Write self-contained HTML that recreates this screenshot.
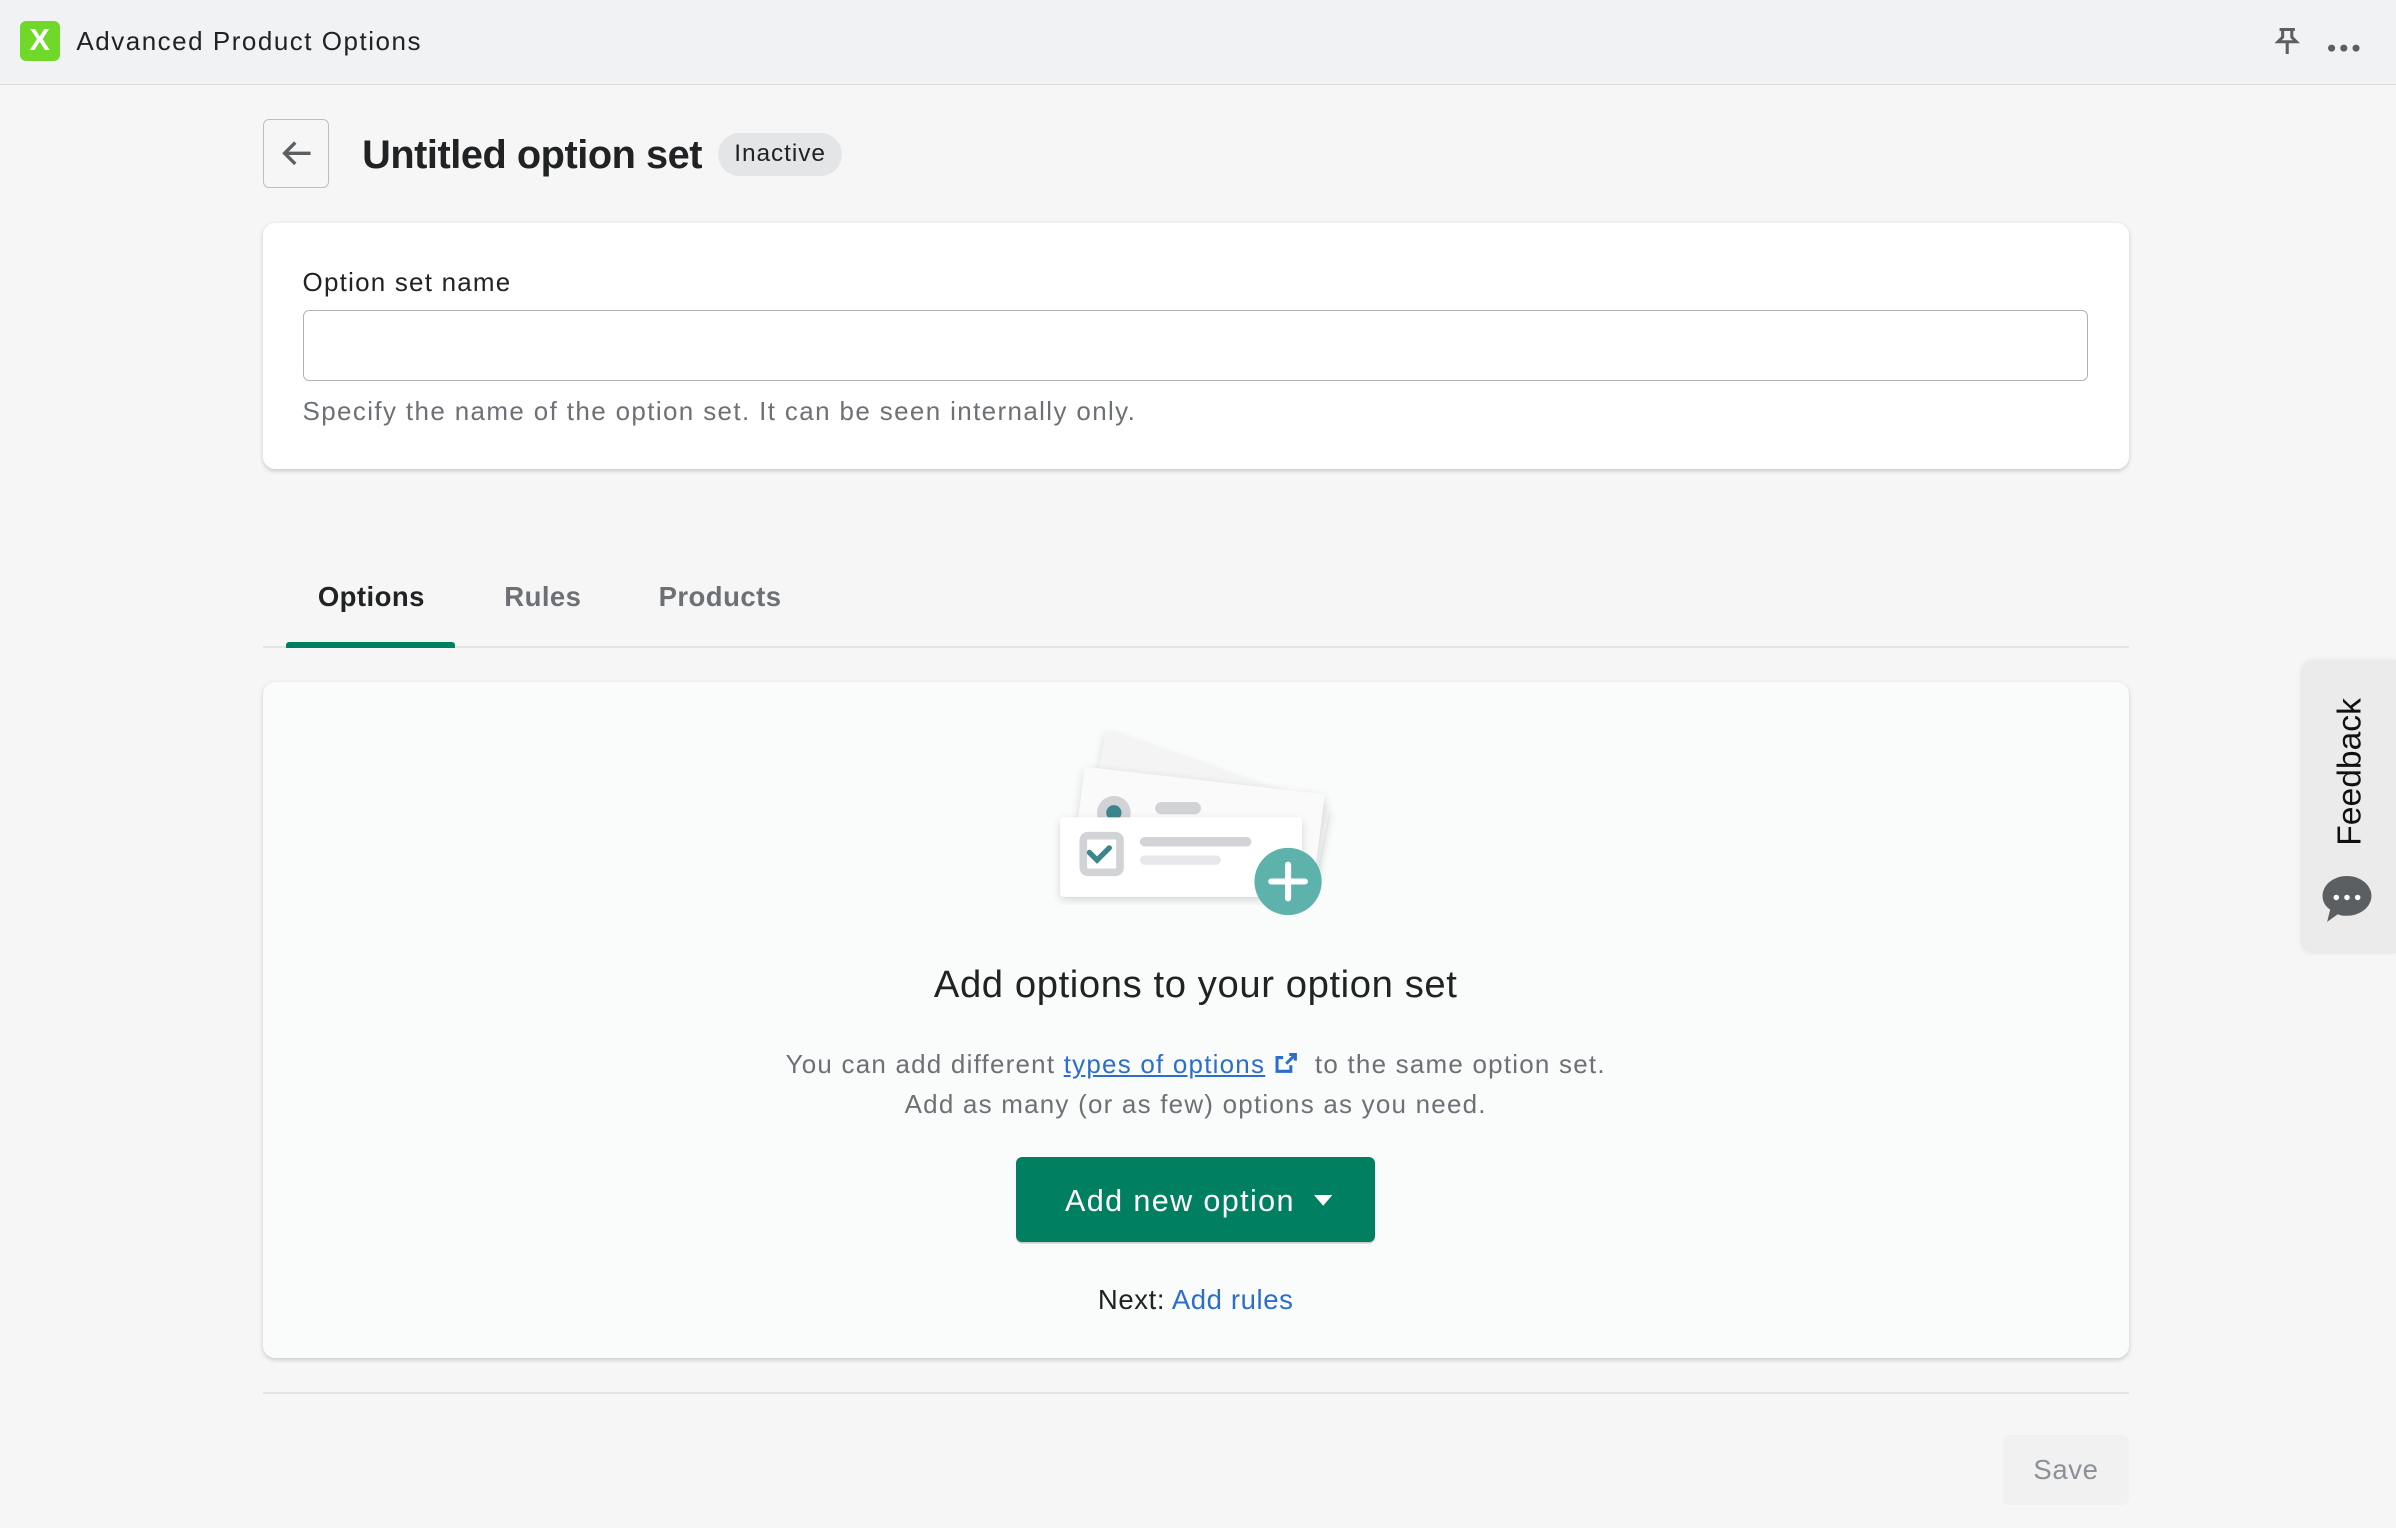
<!DOCTYPE html>
<html><head><meta charset="utf-8"><style>
html,body{margin:0;padding:0;width:2396px;height:1528px;overflow:hidden;background:#f6f6f7}
#w{zoom:1.52806;width:1568px;height:1000px;position:relative;font-family:"Liberation Sans",sans-serif;color:#202223}
.a{position:absolute}
</style></head><body><div id="w">
<div class="a" style="left:0;top:0;width:1568px;height:55px;background:#f1f2f4;border-bottom:1px solid #dcdde0"></div>
<div class="a" style="left:13px;top:14px;width:26px;height:26px;background:#6fd829;border-radius:4px;color:#fff;font-weight:bold;font-size:20px;text-align:center;line-height:26px">X</div>
<div class="a" style="left:50px;top:17px;font-size:17px;letter-spacing:1px">Advanced Product Options</div>
<svg class="a" style="left:1489px;top:18px" width="16" height="18" viewBox="0 0 16 18"><path d="M3 1h10M5 1v5L2 9h12l-3-3V1M8 9v8" stroke="#5c5f62" stroke-width="2" fill="none"/></svg>
<div class="a" style="left:1523px;top:22px;width:22px;height:8px"><svg width="22" height="8"><circle cx="3" cy="4" r="2.3" fill="#5c5f62"/><circle cx="11" cy="4" r="2.3" fill="#5c5f62"/><circle cx="19" cy="4" r="2.3" fill="#5c5f62"/></svg></div>

<div class="a" style="left:172px;top:78px;width:42px;height:44px;border:1px solid #babfc3;border-radius:4px;background:#f6f6f7"></div>
<svg class="a" style="left:183px;top:90px" width="22" height="20" viewBox="0 0 22 20"><path d="M20 10H3M10 3L3 10l7 7" stroke="#5c5f62" stroke-width="2.2" fill="none"/></svg>
<div class="a" style="left:237px;top:87px;font-size:26px;font-weight:600;letter-spacing:-.3px">Untitled option set</div>
<div class="a" style="left:470px;top:87px;width:81px;height:28px;background:#e4e5e7;border-radius:14px;font-size:16px;line-height:28px;text-align:center;letter-spacing:.6px">Inactive</div>

<div class="a" style="left:172px;top:146px;width:1221px;height:161px;background:#fff;border-radius:8px;box-shadow:0 1px 3px rgba(0,0,0,.18)"></div>
<div class="a" style="left:198px;top:175px;font-size:17px;letter-spacing:.8px">Option set name</div>
<div class="a" style="left:198px;top:203px;width:1167px;height:45px;border:1px solid #aeb4b9;border-radius:4px;background:#fff"></div>
<div class="a" style="left:198px;top:259px;font-size:17px;color:#6d7175;letter-spacing:.9px">Specify the name of the option set. It can be seen internally only.</div>

<div class="a" style="left:208px;top:380px;font-size:18px;font-weight:600;letter-spacing:.3px">Options</div>
<div class="a" style="left:330px;top:380px;font-size:18px;color:#6d7175;font-weight:600;letter-spacing:.3px">Rules</div>
<div class="a" style="left:431px;top:380px;font-size:18px;color:#6d7175;font-weight:600;letter-spacing:.3px">Products</div>
<div class="a" style="left:172px;top:423px;width:1221px;height:1px;background:#e1e3e5"></div>
<div class="a" style="left:187px;top:420px;width:111px;height:4px;background:#008060;border-radius:2px 2px 0 0"></div>

<div class="a" style="left:172px;top:446px;width:1221px;height:443px;background:#fafbfb;border-radius:8px;box-shadow:0 1px 3px rgba(0,0,0,.18)"></div>
<svg class="a" style="left:680px;top:470px" width="200" height="135" viewBox="0 0 200 135">
<defs><filter id="s"><feDropShadow dx="0" dy="2" stdDeviation="3" flood-opacity=".15"/></filter></defs>
<path d="M44 8L190 60 180 110 34 60Z" fill="#f4f4f5" filter="url(#s)"/>
<path d="M30 32L187 50 180 105 22 95Z" fill="#fafafa" filter="url(#s)"/>
<circle cx="49" cy="62" r="11" fill="#d2d3d7"/><circle cx="49" cy="62" r="5" fill="#3c858c"/>
<rect x="76" y="55" width="30" height="8" rx="4" fill="#d2d3d7"/>
<rect x="14" y="65" width="158" height="52" rx="2" fill="#fff" filter="url(#s)"/>
<rect x="29" y="77" width="24" height="24" rx="3" fill="none" stroke="#d2d3d7" stroke-width="5"/>
<path d="M33 88l5 5 8-8" stroke="#3c858c" stroke-width="3.5" fill="none" stroke-linecap="round"/>
<rect x="66" y="78" width="73" height="6" rx="3" fill="#d2d3d7"/>
<rect x="66" y="90" width="53" height="6" rx="3" fill="#e6e7ea"/>
<circle cx="163" cy="107" r="22" fill="#5db3ab"/>
<path d="M152 107h22M163 96v22" stroke="#fff" stroke-width="4" stroke-linecap="round"/>
</svg>
<div class="a" style="left:172px;top:630px;width:1221px;text-align:center;font-size:25px;letter-spacing:.4px">Add options to your option set</div>
<div class="a" style="left:172px;top:684px;width:1221px;text-align:center;font-size:17px;color:#6d7175;line-height:26px;letter-spacing:.8px">You can add different <span style="color:#2c6ecb;text-decoration:underline">types of options</span> <svg width="16" height="14" viewBox="0 0 16 14" style="vertical-align:-1px"><path d="M6 3H2v9h9V8M8 7l6-6M10 1h4v4" stroke="#2c6ecb" stroke-width="2" fill="none"/></svg> &nbsp;to the same option set.<br>Add as many (or as few) options as you need.</div>
<div class="a" style="left:665px;top:757px;width:235px;height:56px;background:#008060;border-radius:4px;box-shadow:0 1px 0 rgba(0,0,0,.2);color:#fff;font-size:20px;line-height:58px"><span style="position:absolute;left:32px;letter-spacing:.9px">Add new option</span><svg style="position:absolute;left:195px;top:25px" width="12" height="7"><path d="M0 0h12L6 7z" fill="#fff"/></svg></div>
<div class="a" style="left:172px;top:840px;width:1221px;text-align:center;font-size:18px;letter-spacing:.4px">Next: <span style="color:#2c6ecb">Add rules</span></div>

<div class="a" style="left:172px;top:911px;width:1221px;height:1px;background:#e1e3e5"></div>
<div class="a" style="left:1311px;top:939px;width:82px;height:46px;background:#f1f1f1;border-radius:4px;color:#8c9196;font-size:18px;line-height:46px;text-align:center;letter-spacing:.4px">Save</div>

<div class="a" style="left:1507px;top:432px;width:61px;height:192px;background:#ebebeb;border-radius:8px 0 0 8px;box-shadow:-1px 0 3px rgba(0,0,0,.08)"></div>
<div class="a" style="left:1488px;top:490px;width:100px;height:30px;transform:rotate(-90deg);font-size:22px;text-align:center;line-height:30px;color:#111">Feedback</div>
<svg class="a" style="left:1519px;top:571px" width="34" height="34" viewBox="0 0 34 34"><path d="M17 2C8 2 1 8 1 15c0 4 2 7 5 9l-2 8 7-5c2 1 4 1 6 1 9 0 16-6 16-13S26 2 17 2z" fill="#5c5f62"/><circle cx="10" cy="16" r="1.8" fill="#fff"/><circle cx="17" cy="16" r="1.8" fill="#fff"/><circle cx="24" cy="16" r="1.8" fill="#fff"/></svg>
</div></body></html>
